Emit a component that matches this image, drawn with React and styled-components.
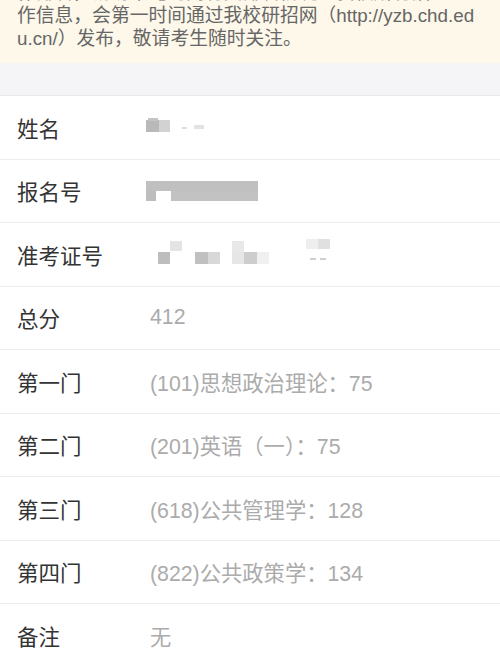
import React from "react";
import styled, { createGlobalStyle } from "styled-components";

const GlobalStyle = createGlobalStyle`
  html, body {
    margin: 0;
    padding: 0;
    background: #f5f5f7;
  }
  body {
    font-family: "Liberation Sans", "Noto Sans CJK SC", sans-serif;
    overflow: hidden;
  }
`;

const Page = styled.div`
  width: 500px;
  height: 666px;
  overflow: hidden;
`;

const Notice = styled.div`
  background: #fdf8ea;
  color: #666;
  font-size: 18.8px;
  line-height: 23px;
  padding: 0 17px 13px;
  margin-top: -19px;
`;

const NoticeLine = styled.div`
  white-space: nowrap;
`;

const Gap = styled.div`
  height: 32px;
  background: #f5f5f7;
`;

const List = styled.div`
  background: #fff;
  border-top: 1px solid #e8e8ea;
`;

const Row = styled.div`
  display: flex;
  align-items: center;
  height: 62.5px;
  border-bottom: 1px solid #ececee;
  padding-left: 17px;
`;

const Label = styled.div`
  width: 133px;
  flex: none;
  font-size: 21.5px;
  color: #333;
`;

const Value = styled.div`
  font-size: 21.3px;
  color: #ababab;
`;

const Mosaic = styled.div`
  position: relative;
  width: 200px;
  height: 30px;
`;

const Tile = styled.div`
  position: absolute;
  background: ${(p) => p.$c};
`;

const tiles = {
  name: [
    [0, 8, 13, 12, "#b9b9b9"],
    [13, 8, 11, 12, "#d2d2d2"],
    [2, 6, 10, 3, "#c4c4c4"],
    [36, 15, 5, 2, "#dddddd"],
    [48, 13, 10, 4, "#e2e2e2"],
  ],
  reg: [
    [0, 5, 112, 10, "#c0c0c0"],
    [0, 15, 25, 10, "#bdbdbd"],
    [25, 15, 87, 10, "#c2c2c2"],
    [10, 15, 15, 10, "#ffffff"],
  ],
  ticket: [
    [12, 13, 12, 12, "#bdbdbd"],
    [24, 2, 12, 10, "#e4e4e4"],
    [49, 13, 13, 12, "#c0c0c0"],
    [62, 13, 12, 12, "#d8d8d8"],
    [86, 2, 12, 11, "#e8e8e8"],
    [86, 13, 12, 12, "#e6e6e6"],
    [98, 13, 13, 12, "#cdcdcd"],
    [111, 13, 12, 12, "#f0f0f0"],
    [160, 0, 12, 10, "#eeeeee"],
    [172, 0, 12, 10, "#e0e0e0"],
    [164, 19, 6, 2, "#cfcfcf"],
    [174, 19, 6, 2, "#cfcfcf"],
  ],
};

const Redacted = ({ kind, offset = 0 }) => (
  <Mosaic style={{ marginLeft: offset }}>
    {tiles[kind].map(([x, y, w, h, c], i) => (
      <Tile key={i} $c={c} style={{ left: x, top: y, width: w, height: h }} />
    ))}
  </Mosaic>
);

const scores = [
  ["总分", "412"],
  ["第一门", "(101)思想政治理论：75"],
  ["第二门", "(201)英语（一）：75"],
  ["第三门", "(618)公共管理学：128"],
  ["第四门", "(822)公共政策学：134"],
  ["备注", "无"],
];

const App = () => (
  <Page>
    <GlobalStyle />
    <Notice>
      <NoticeLine>作排名，请勿来电询问有关排名情况。我校所有招生工</NoticeLine>
      <NoticeLine>作信息，会第一时间通过我校研招网（http://yzb.chd.ed</NoticeLine>
      <NoticeLine>u.cn/）发布，敬请考生随时关注。</NoticeLine>
    </Notice>
    <Gap />
    <List>
      <Row>
        <Label>姓名</Label>
        <Redacted kind="name" offset={-4} />
      </Row>
      <Row>
        <Label>报名号</Label>
        <Redacted kind="reg" offset={-4} />
      </Row>
      <Row>
        <Label>准考证号</Label>
        <Redacted kind="ticket" offset={-4} />
      </Row>
      {scores.map(([k, v]) => (
        <Row key={k}>
          <Label>{k}</Label>
          <Value>{v}</Value>
        </Row>
      ))}
    </List>
  </Page>
);

export default App;
